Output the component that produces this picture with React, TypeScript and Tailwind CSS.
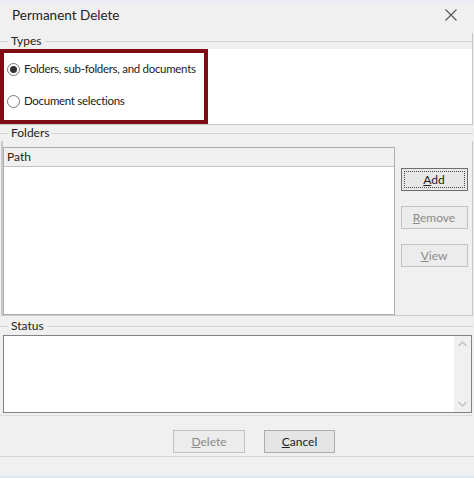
import React from 'react';

const font = { fontFamily: 'Lato, "Noto Sans", sans-serif' };

function GroupHeader({ label }: { label: string }) {
  return (
    <div className="flex items-start h-[16px]">
      <div className="w-[8px] h-px mt-[8px] bg-[#d3d3d3]" />
      <span className="px-[3px] mt-[1px] text-[12px] text-[#222] leading-[14px] whitespace-nowrap">{label}</span>
      <div className="flex-1 h-px mt-[8px] bg-[#d3d3d3]" />
    </div>
  );
}

function Radio({ checked, label }: { checked?: boolean; label: string }) {
  return (
    <div className="flex items-center h-[16px] gap-[4px]">
      <div className="ml-[3px] w-[13px] h-[13px] shrink-0 rounded-full border border-[#7a7a7a] bg-white flex items-center justify-center">
        {checked && <div className="w-[7px] h-[7px] rounded-full bg-[#333]" />}
      </div>
      <span className="text-[11.5px] tracking-[-0.3px] text-[#222] leading-none whitespace-nowrap">{label}</span>
    </div>
  );
}

function Btn({ children, disabled, focused, w }: { children: React.ReactNode; disabled?: boolean; focused?: boolean; w: string }) {
  return (
    <button
      className={`${w} h-[23px] shrink-0 flex items-center justify-center text-[12px] leading-none ${
        disabled ? 'border border-[#c2c2c2] bg-[#ececec] text-[#8a8a8a]' : focused ? 'border border-[#6f6f6f] bg-[#e8e8e8] text-[#222]' : 'border border-[#adadad] bg-[#e5e5e5] text-[#222]'
      }`}
    >
      {focused ? (
        <span className="w-[calc(100%-4px)] h-[calc(100%-4px)] border border-dotted border-[#444] flex items-center justify-center">{children}</span>
      ) : (
        children
      )}
    </button>
  );
}

export default function App() {
  return (
    <div className="w-[474px] h-[478px] bg-[#f0f0f0] flex flex-col overflow-hidden" style={font}>
      <div className="h-[2px] bg-[#e8eef4]" />
      <div className="h-[31px] flex items-center justify-between pl-[12px] pr-[16px] pb-[4px]">
        <span className="text-[13.5px] text-[#222]">Permanent Delete</span>
        <svg width="12" height="12" viewBox="0 0 12 12" className="mr-[1px] -mt-[2px]">
          <path d="M0.5 0.5 L11.5 11.5 M11.5 0.5 L0.5 11.5" stroke="#555" strokeWidth="1.1" />
        </svg>
      </div>

      <div className="w-[473px] border-r border-[#c8c8c8]">
        <GroupHeader label="Types" />
        <div className="h-[76px] bg-white border-b border-[#c8c8c8]">
          <div className="w-[208px] h-[75px] border-[4px] border-[#7e0b16] pt-[8px] flex flex-col gap-[16px]">
            <Radio checked label="Folders, sub-folders, and documents" />
            <Radio label="Document selections" />
          </div>
        </div>
      </div>

      <div className="w-[473px]">
        <GroupHeader label="Folders" />
        <div className="flex border-l-[2px] border-r border-b border-[#c8c8c8] ml-[1px] pt-[6px]">
          <div className="w-[392px] h-[168px] flex flex-col border border-[#adadad] bg-white">
            <div className="h-[19px] bg-[#f0f0f0] border-b border-[#c3c3c3] flex items-center pl-[3px]">
              <span className="text-[12px] text-[#222] leading-none">Path</span>
            </div>
            <div className="flex-1" />
          </div>
          <div className="flex-1 flex flex-col items-center pt-[21px] gap-[15px] pl-[1px]">
            <Btn w="w-[67px]" focused>
              <span><span className="underline">A</span>dd</span>
            </Btn>
            <Btn w="w-[67px]" disabled>
              <span><span className="underline">R</span>emove</span>
            </Btn>
            <Btn w="w-[67px]" disabled>
              <span><span className="underline">V</span>iew</span>
            </Btn>
          </div>
        </div>
      </div>

      <div className="w-[473px] mt-[2px]">
        <GroupHeader label="Status" />
        <div className="ml-[3px] mr-[1px] mt-[1px] h-[78px] border border-[#828282] bg-white flex">
          <div className="flex-1" />
          <div className="w-[17px] bg-[#f0f0f0] flex flex-col items-center justify-between py-[5px]">
            <svg width="9" height="6" viewBox="0 0 9 6"><path d="M0.5 5 L4.5 1 L8.5 5" fill="none" stroke="#bdbdbd" strokeWidth="1.2" /></svg>
            <svg width="9" height="6" viewBox="0 0 9 6"><path d="M0.5 1 L4.5 5 L8.5 1" fill="none" stroke="#bdbdbd" strokeWidth="1.2" /></svg>
          </div>
        </div>
        <div className="h-px bg-[#dcdcdc] mt-[2px]" />
      </div>

      <div className="flex gap-[19px] mt-[14px] pl-[173px]">
        <Btn w="w-[72px]" disabled>
          <span><span className="underline">D</span>elete</span>
        </Btn>
        <Btn w="w-[71px]">
          <span><span className="underline">C</span>ancel</span>
        </Btn>
      </div>
      <div className="h-px bg-[#d5d5d5] mt-[3px]" />
      <div className="flex-1" />
      <div className="h-[2px] bg-[#dde8f2]" />
    </div>
  );
}
